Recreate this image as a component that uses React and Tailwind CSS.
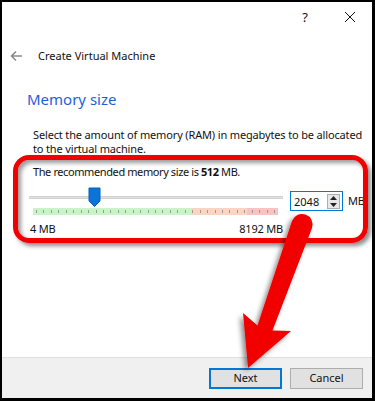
import React from "react";

const ticks = Array.from({ length: 33 }, (_, i) => i);

export default function App() {
  return (
    <div className="relative w-[375px] h-[401px] overflow-hidden bg-black" style={{ fontFamily: '"Noto Sans", "Open Sans", sans-serif' }}>
      <div className="absolute left-[2px] top-[2px] w-[370px] h-[396px] bg-white flex flex-col text-[#000]">
        {/* title bar */}
        <div className="h-[30px] flex items-center justify-end pr-[16px] gap-[36px] text-[#111]">
          <span className="text-[13px] leading-none">?</span>
          <svg width="12" height="12" viewBox="0 0 12 12">
            <path d="M1 1 L11 11 M11 1 L1 11" stroke="#111" strokeWidth="1" fill="none" />
          </svg>
        </div>
        {/* header */}
        <div className="mt-[14px] h-[20px] flex items-center pl-[8px]">
          <svg width="13" height="12" viewBox="0 0 13 12">
            <path d="M12 6 H1.5 M6 1.5 L1.5 6 L6 10.5" stroke="#8a8a8a" strokeWidth="1.6" fill="none" />
          </svg>
          <span className="ml-[15px] text-[11px] leading-[20px] text-[#111]">Create Virtual Machine</span>
        </div>
        {/* heading */}
        <div className="mt-[23px] pl-[25px] text-[15px] leading-[20px] text-[#1e5fd8]">Memory size</div>
        {/* description */}
        <div className="mt-[19px] pl-[31px] flex flex-col text-[11px] leading-[14px] tracking-[-0.15px] whitespace-nowrap text-[#111]">
          <span>Select the amount of memory (RAM) in megabytes to be allocated</span>
          <span>to the virtual machine.</span>
        </div>
        {/* recommended */}
        <div className="mt-[8px] pl-[31px] text-[11px] leading-[16px] tracking-[-0.4px] whitespace-nowrap text-[#111]">
          The recommended memory size is <span className="font-bold">512</span> MB.
        </div>
        {/* slider row */}
        <div className="mt-[7px] flex items-start pl-[27px]">
          <div className="w-[254px] flex flex-col">
            <div className="relative h-[20px]">
              <div className="mt-[9px] h-[3px] bg-[#e3e3e3] border-y border-[#d0d0d0]" />
              <svg className="absolute left-[59px] top-0" width="13" height="20" viewBox="0 0 13 20">
                <path d="M1 1 H12 V14 L6.5 19.5 L1 14 Z" fill="#0a74d8" stroke="#0060c0" strokeWidth="1" />
              </svg>
            </div>
            <div className="relative ml-[4px] mr-[5px] mt-[1px] h-[7px] flex">
              <div className="w-[159px] bg-[#c8f4c8]" />
              <div className="w-[55px] bg-[#fbd4c2]" />
              <div className="flex-1 bg-[#f9c3c3]" />
              <div className="absolute inset-x-[3px] top-[2px] h-[3px] flex justify-between">
                {ticks.map((t) => (
                  <div key={t} className="w-px h-full bg-[#9a9a9a]" />
                ))}
              </div>
            </div>
            <div className="mt-[7px] flex justify-between pl-[1px] text-[11px] leading-[14px] tracking-[-0.2px] text-[#111]">
              <span>4 MB</span>
              <span>8192 MB</span>
            </div>
          </div>
          <div className="ml-[7px] mt-[4px] w-[53px] h-[20px] border border-[#0078d7] bg-white flex items-center">
            <span className="pl-[3px] text-[11px] leading-none text-[#111] flex-1">2048</span>
            <div className="mr-[2px] w-[13px] h-[15px] border border-[#adadad] bg-[#e8e8e8] flex flex-col items-center justify-center gap-[3px]">
              <svg width="7" height="4" viewBox="0 0 7 4"><path d="M0 4 L3.5 0 L7 4 Z" fill="#222" /></svg>
              <svg width="7" height="4" viewBox="0 0 7 4"><path d="M0 0 L3.5 4 L7 0 Z" fill="#222" /></svg>
            </div>
          </div>
          <span className="ml-[5px] mt-[6px] text-[11px] leading-[16px] tracking-[-0.3px] text-[#111]">MB</span>
        </div>
        {/* footer */}
        <div className="mt-auto h-[41px] border-t border-[#dfdfdf] bg-[#f0f0f0] flex justify-end items-start pt-[10px] pr-[9px] gap-[8px]">
          <div className="w-[73px] h-[21px] border-2 border-[#0078d7] bg-[#e1e1e1] flex items-center justify-center text-[11px] text-[#111]">Next</div>
          <div className="w-[73px] h-[21px] border border-[#adadad] bg-[#e1e1e1] flex items-center justify-center text-[11px] text-[#111]">Cancel</div>
        </div>
      </div>
      {/* annotation box */}
      <div className="absolute left-[13px] top-[155px] w-[355px] h-[88px] rounded-[16px] border-[5px] border-[#f20000] shadow-[3px_3px_4px_rgba(0,0,0,0.45),inset_3px_3px_4px_rgba(0,0,0,0.4)]" />
      {/* annotation arrow */}
      <svg className="absolute inset-0 pointer-events-none" width="375" height="401" viewBox="0 0 375 401">
        <defs>
          <filter id="sh" x="-20%" y="-20%" width="150%" height="150%">
            <feDropShadow dx="-3" dy="3" stdDeviation="2.5" floodColor="#000" floodOpacity="0.45" />
          </filter>
        </defs>
        <path
          d="M292 221 L257.5 325.4 L243 313 L248 368 L291 331 L272.5 330.6 L312 228 A10.5 10.5 0 0 0 292 221 Z"
          fill="#f20000"
          filter="url(#sh)"
        />
      </svg>
    </div>
  );
}
